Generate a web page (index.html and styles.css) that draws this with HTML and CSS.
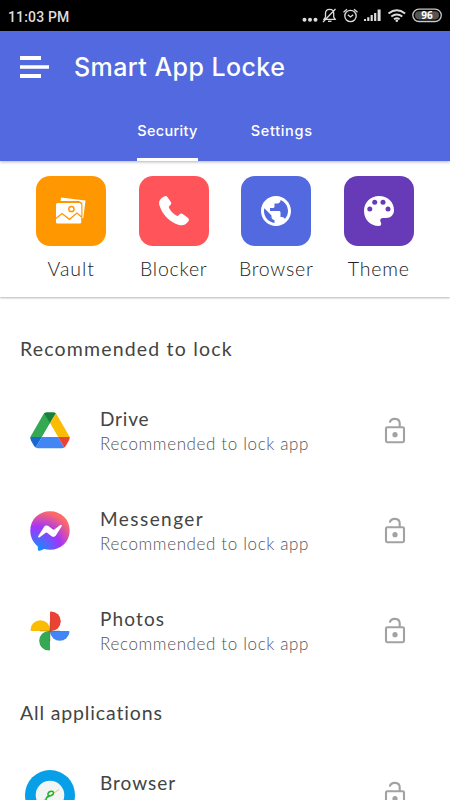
FILE: index.html
```html
<!DOCTYPE html>
<html lang="en">
<head>
<meta charset="utf-8">
<title>Smart App Locke</title>
<link rel="stylesheet" href="styles.css">
</head>
<body>
<svg class="defs" width="0" height="0" aria-hidden="true">
  <symbol id="lock" viewBox="0 0 22 28">
    <rect x="2" y="10.200" width="18" height="15" rx="1.4" fill="none" stroke="#a2a2a2" stroke-width="2.1"/>
    <path d="M5.8 5.600C6.800 .4 15.700 .5 15.700 6.500v4" fill="none" stroke="#a2a2a2" stroke-width="2.1"/>
    <circle cx="11" cy="17.700" r="2.6" fill="#a2a2a2"/>
  </symbol>
</svg>
<div class="status">
  <span class="clock">11:03 PM</span>
  <svg class="status-icons" width="142" height="22" viewBox="300 5 142 22">
    <g fill="#ddd"><circle cx="304.5" cy="19.7" r="2"/><circle cx="310" cy="19.7" r="2"/><circle cx="315.500" cy="19.7" r="2"/></g>
    <g fill="none" stroke="#ddd" stroke-width="1.3">
      <path d="M324 19.300h11.200l-1.500-2.300v-3.500c0-5.500-8.200-5.500-8.200 0V17zM323 22l12.500-13"/>
      <path d="M328 21.300h3.500"/>
      <circle cx="350.500" cy="16" r="5.700"/>
      <path d="M343.500 12.200l3.500-3M357.500 12.200l-3.500-3M347.800 14.700l2.700 2.300 2.700-2.300"/>
    </g>
    <path fill="#ddd" d="M364 21v-2h2v2zM367.200 21v-3.800h2.200V21zM370.600 21v-6h2.200v6zM374.100 21v-8h2.200v8zM377.600 21V9.500h3V21z"/>
    <g fill="none" stroke="#ddd" stroke-width="1.9"><path d="M388.500 13.500q8.300-6.500 16.600 0M391.300 16.500q5.500-4.200 11 0M394 19.300q2.800-2 5.600 0"/></g>
    <circle cx="396.800" cy="20.800" r="1.300" fill="#ddd"/>
    <rect x="412.800" y="9.100" width="28.500" height="12.400" rx="6.200" fill="#000" stroke="#c8c8c8" stroke-width="1.300"/>
    <rect x="415" y="11.200" width="24" height="8.200" rx="4.100" fill="#555"/>
    <text x="427" y="19.200" class="battery">96</text>
  </svg>
</div>
<header class="appbar">
  <div class="title-row">
    <svg class="menu" width="30" height="22" viewBox="0 0 30 22" fill="#fff"><path d="M0 0h21v4H0zM0 9.200h29v3.600H0zM0 18h21v4H0z"/></svg>
    <h1>Smart App Locke</h1>
  </div>
  <nav class="tabs"><a class="tab active"><span class="t-sec">Security</span></a><a class="tab"><span class="t-set">Settings</span></a></nav>
</header>
<section class="tools">
  <div class="tool">
    <div class="tile orange"><svg width="32" height="32" viewBox="0 0 32 32">
      <path d="M6 2.500l24.500 3-2.300 18h-2V9q0-3-3-3H5.600z" fill="#fff"/>
      <rect x="1" y="8" width="25.300" height="20.500" rx="1.500" fill="#fff"/>
      <path d="M1 23.500l6-5 7.500 5.800L22 18l4.500 4" fill="none" stroke="#ff9800" stroke-width="1.300"/>
      <path d="M5 7.400h19.300q2.600 0 2.600 2.600v15" fill="none" stroke="#ff9800" stroke-width="1.100"/>
      <circle cx="16.400" cy="14" r="2.600" fill="none" stroke="#ff9800" stroke-width="1.500"/>
    </svg></div>
    <span class="vault">Vault</span>
  </div>
  <div class="tool">
    <div class="tile red"><svg width="32" height="32" viewBox="0 0 32 32"><path fill="#fff" d="M5.500 1.800c2-1.500 3.300-.8 4.400.9l2.800 4c1 1.500.7 2.500-.7 3.800l-1.300 1.300c1 3.700 5.200 7.900 9 9.300l2-1.800c1-1 2-.9 3.300 0l4.500 3.100c1.800 1.400 1.800 2.700.5 4.300-2.400 3.200-5.300 4.200-9 3.200C11.800 27.500 4 19 1.400 10.300.4 6.300 2.200 3.800 5.500 1.800z"/></svg></div>
    <span class="blocker">Blocker</span>
  </div>
  <div class="tool">
    <div class="tile blue"><svg width="36" height="36" viewBox="0 0 24 24"><path fill="#fff" d="M12 2C6.480 2 2 6.480 2 12s4.480 10 10 10 10-4.480 10-10S17.520 2 12 2zm-1 17.930c-3.950-.49-7-3.850-7-7.930 0-.62.080-1.210.21-1.790L9 15v1c0 1.100.9 2 2 2v1.930zm6.900-2.540c-.26-.81-1-1.390-1.900-1.390h-1v-3c0-.55-.45-1-1-1H8v-2h2c.55 0 1-.45 1-1V7h2c1.100 0 2-.9 2-2v-.41c2.930 1.190 5 4.060 5 7.410 0 2.080-.8 3.970-2.100 5.390z"/></svg></div>
    <span class="browser">Browser</span>
  </div>
  <div class="tool">
    <div class="tile purple"><svg width="32" height="32" viewBox="0 0 32 32"><path fill="#fff" d="M16 1C7.500 1 1 7.500 1 16s6.500 15 14.500 15c2 0 2.700-1 2.700-2.300 0-1.500-1-1.800-1-3.200 0-1.500 1.100-2.500 2.600-2.500H23c5 0 8-3.500 8-8C31 7 24.500 1 16 1z"/><g fill="#673ab7"><circle cx="6.800" cy="14" r="2.500"/><circle cx="11.700" cy="7.300" r="2.500"/><circle cx="20" cy="7.300" r="2.500"/><circle cx="25" cy="14" r="2.500"/></g></svg></div>
    <span class="theme">Theme</span>
  </div>
</section>
<main>
  <h2 class="h-rec">Recommended to lock</h2>
  <article class="app">
    <svg class="logo" width="50" height="50" viewBox="0 0 50 50">
      <path fill="#34a853" d="M19 7.200h8.800L25 17.200 17 31H5.300z"/>
      <path fill="#188038" d="M19 7.200q1.500-1 3-1h6q1.600 0 3 1L25 17z"/>
      <path fill="#fbbc04" d="M31 7.200L25 17.200 33 31h11.700z"/>
      <path fill="#1967d2" d="M5.300 31H17l-6.300 10.600q-1-.6-1.800-1.800L6 34.500q-.8-1.500-.7-3.500z"/>
      <path fill="#4285f4" d="M17 31h16l6.300 10.600q-1 .6-2.300.6H13q-1.300 0-2.300-.6z"/>
      <path fill="#ea4335" d="M33 31h11.700q0 2-.8 3.500l-3 5.300q-.7 1.200-1.600 1.800z"/>
      <path fill="#fff" d="M25 17.300L33 31H17z"/>
    </svg>
    <div class="text"><h3 class="n-drive">Drive</h3><p>Recommended to lock app</p></div>
    <svg class="lock" width="22" height="28"><use href="#lock"/></svg>
  </article>
  <article class="app">
    <svg class="logo" width="50" height="50" viewBox="0 0 50 50">
      <defs><radialGradient id="msg" cx=".18" cy="1" r="1.100"><stop offset="0" stop-color="#0695ff"/><stop offset=".55" stop-color="#a334fa"/><stop offset=".93" stop-color="#ff6968"/></radialGradient></defs>
      <path fill="url(#msg)" d="M25 5.300c11.200 0 19.700 8.200 19.700 19.200S36.200 43.800 25 43.800c-2 0-4-.3-5.700-.8l-4.500 1.700q-1.800.6-1.900-1.200l-.2-3.300C8 36.500 5.300 31 5.300 24.500 5.300 13.500 13.800 5.300 25 5.300z"/>
      <path fill="#fff" d="M13.300 29.900l5.800-9.100c1-1.500 2.900-1.800 4.300-.8l4.500 3.500q.7.600 1.400 0l6-4.500c1-.7 2 .3 1.400 1.300l-5.800 9.100c-1 1.500-2.900 1.800-4.300.8l-4.500-3.500q-.7-.5-1.400 0l-6 4.500c-1 .7-2-.3-1.400-1.300z"/>
    </svg>
    <div class="text"><h3 class="n-msg">Messenger</h3><p>Recommended to lock app</p></div>
    <svg class="lock" width="22" height="28"><use href="#lock"/></svg>
  </article>
  <article class="app">
    <svg class="logo" width="50" height="50" viewBox="0 0 50 50">
      <path fill="#fbbc04" d="M25.200 25H6.500q-1 0-1-1a9.800 9.800 0 0 1 19.700 0z"/>
      <path fill="#ea4335" d="M25 25V6.400q0-1 1-1a9.800 9.800 0 0 1 0 19.600z"/>
      <path fill="#4285f4" d="M25 25h18.500q1 0 1 1a9.800 9.800 0 0 1-19.500 0z"/>
      <path fill="#34a853" d="M25 25v18.600q0 1-1 1a9.800 9.800 0 0 1 0-19.600z"/>
      <path d="M15 25h10v-9M25 35V25h10" fill="none" stroke="#5f4920" stroke-opacity=".45" stroke-width=".8"/>
    </svg>
    <div class="text"><h3 class="n-photos">Photos</h3><p>Recommended to lock app</p></div>
    <svg class="lock" width="22" height="28"><use href="#lock"/></svg>
  </article>
  <h2 class="h-all">All applications</h2>
  <article class="app">
    <svg class="logo" width="50" height="50" viewBox="0 0 50 50">
      <circle cx="25" cy="25" r="25" fill="#079fe8"/><circle cx="25" cy="25" r="14.300" fill="#f1f5f3"/>
      <path d="M17.500 31L34 19.500" stroke="#f3bd69" stroke-width="1"/>
      <path d="M22.500 25.800h2c2.500 0 4-1.300 4-3 0-2.400-5-2-5.500 1.200-.3 1.600.4 2 1 2.300-2 .5-3 2-3 3.700 0 3.200 4.500 2.500 6.800.3" fill="none" stroke="#20b529" stroke-width="1.500"/>
    </svg>
    <div class="text"><h3 class="n-browser">Browser</h3></div>
    <svg class="lock" width="22" height="28"><use href="#lock"/></svg>
  </article>
</main>
</body>
</html>
```
FILE: styles.css
```css
* { box-sizing: border-box; margin: 0; padding: 0; }
html, body { width: 450px; height: 800px; overflow: hidden; background: #fff; }
body { font-family: Lato, "Liberation Sans", sans-serif; color: #444; display: flex; flex-direction: column; }
h1, h2, h3, p, span { white-space: nowrap; }
svg { display: block; flex: none; }
.defs { position: absolute; }
.status { flex: none; height: 31px; background: #000; display: flex; justify-content: space-between; padding: 5px 8px 0 8px; }
.clock { font: 500 14px/24px Roboto, sans-serif; letter-spacing: .15px; color: #ddd; }
.battery { font: 700 10px "Open Sans", sans-serif; fill: #fff; text-anchor: middle; }
.appbar { flex: none; position: relative; height: 130px; background: #5369df; color: #fff; box-shadow: 0 1px 3px rgba(0,0,0,.3); font-family: Inter, sans-serif; }
.title-row { display: flex; align-items: center; height: 71px; padding-left: 20px; gap: 24px; }
h1 { font-size: 25px; font-weight: 500; line-height: 30px; letter-spacing: .43px; }
.tabs { display: flex; justify-content: center; gap: 53px; height: 59px; }
.tab { height: 59px; font-size: 14.500px; font-weight: 500; line-height: 58px; }
.t-sec { letter-spacing: .3px; }
.t-set { letter-spacing: .67px; }
.active { border-bottom: 3px solid #fff; }
.tools { flex: none; height: 136px; padding: 15px 20px 0; display: grid; grid-template-columns: repeat(4, 102.500px); box-shadow: 0 1px 2px rgba(0,0,0,.3); }
.tool { display: flex; flex-direction: column; align-items: center; font-size: 19.500px; font-weight: 300; line-height: 24px; color: #222; gap: 11px; }
.vault { letter-spacing: .95px; }
.blocker, .browser { letter-spacing: .75px; }
.theme { letter-spacing: .85px; }
.tile { width: 70px; height: 70px; border-radius: 14px; display: grid; place-items: center; }
.orange { background: #ff9800; }
.red { background: #ff5459; }
.blue { background: #5369df; }
.purple { background: #673ab7; }
main { flex: 1; min-height: 0; overflow: hidden; padding: 39px 20px 0; }
h2 { font-size: 19.500px; font-weight: 400; line-height: 26px; }
.h-rec { margin-bottom: 19px; letter-spacing: 1.18px; }
.app { display: flex; align-items: center; height: 100px; padding: 0 24px 0 5px; }
.text { margin-left: 25px; flex: 1; min-height: 50px; }
h3 { font-size: 19px; font-weight: 400; line-height: 26px; }
.n-drive { letter-spacing: .8px; }
.n-msg { letter-spacing: 1.45px; }
.n-photos { letter-spacing: 1.15px; }
.n-browser { letter-spacing: 1px; }
p { font-size: 17px; font-weight: 300; line-height: 24px; letter-spacing: .63px; color: #555; }
.h-all { margin-top: 19px; margin-bottom: 19px; letter-spacing: .85px; }
```
